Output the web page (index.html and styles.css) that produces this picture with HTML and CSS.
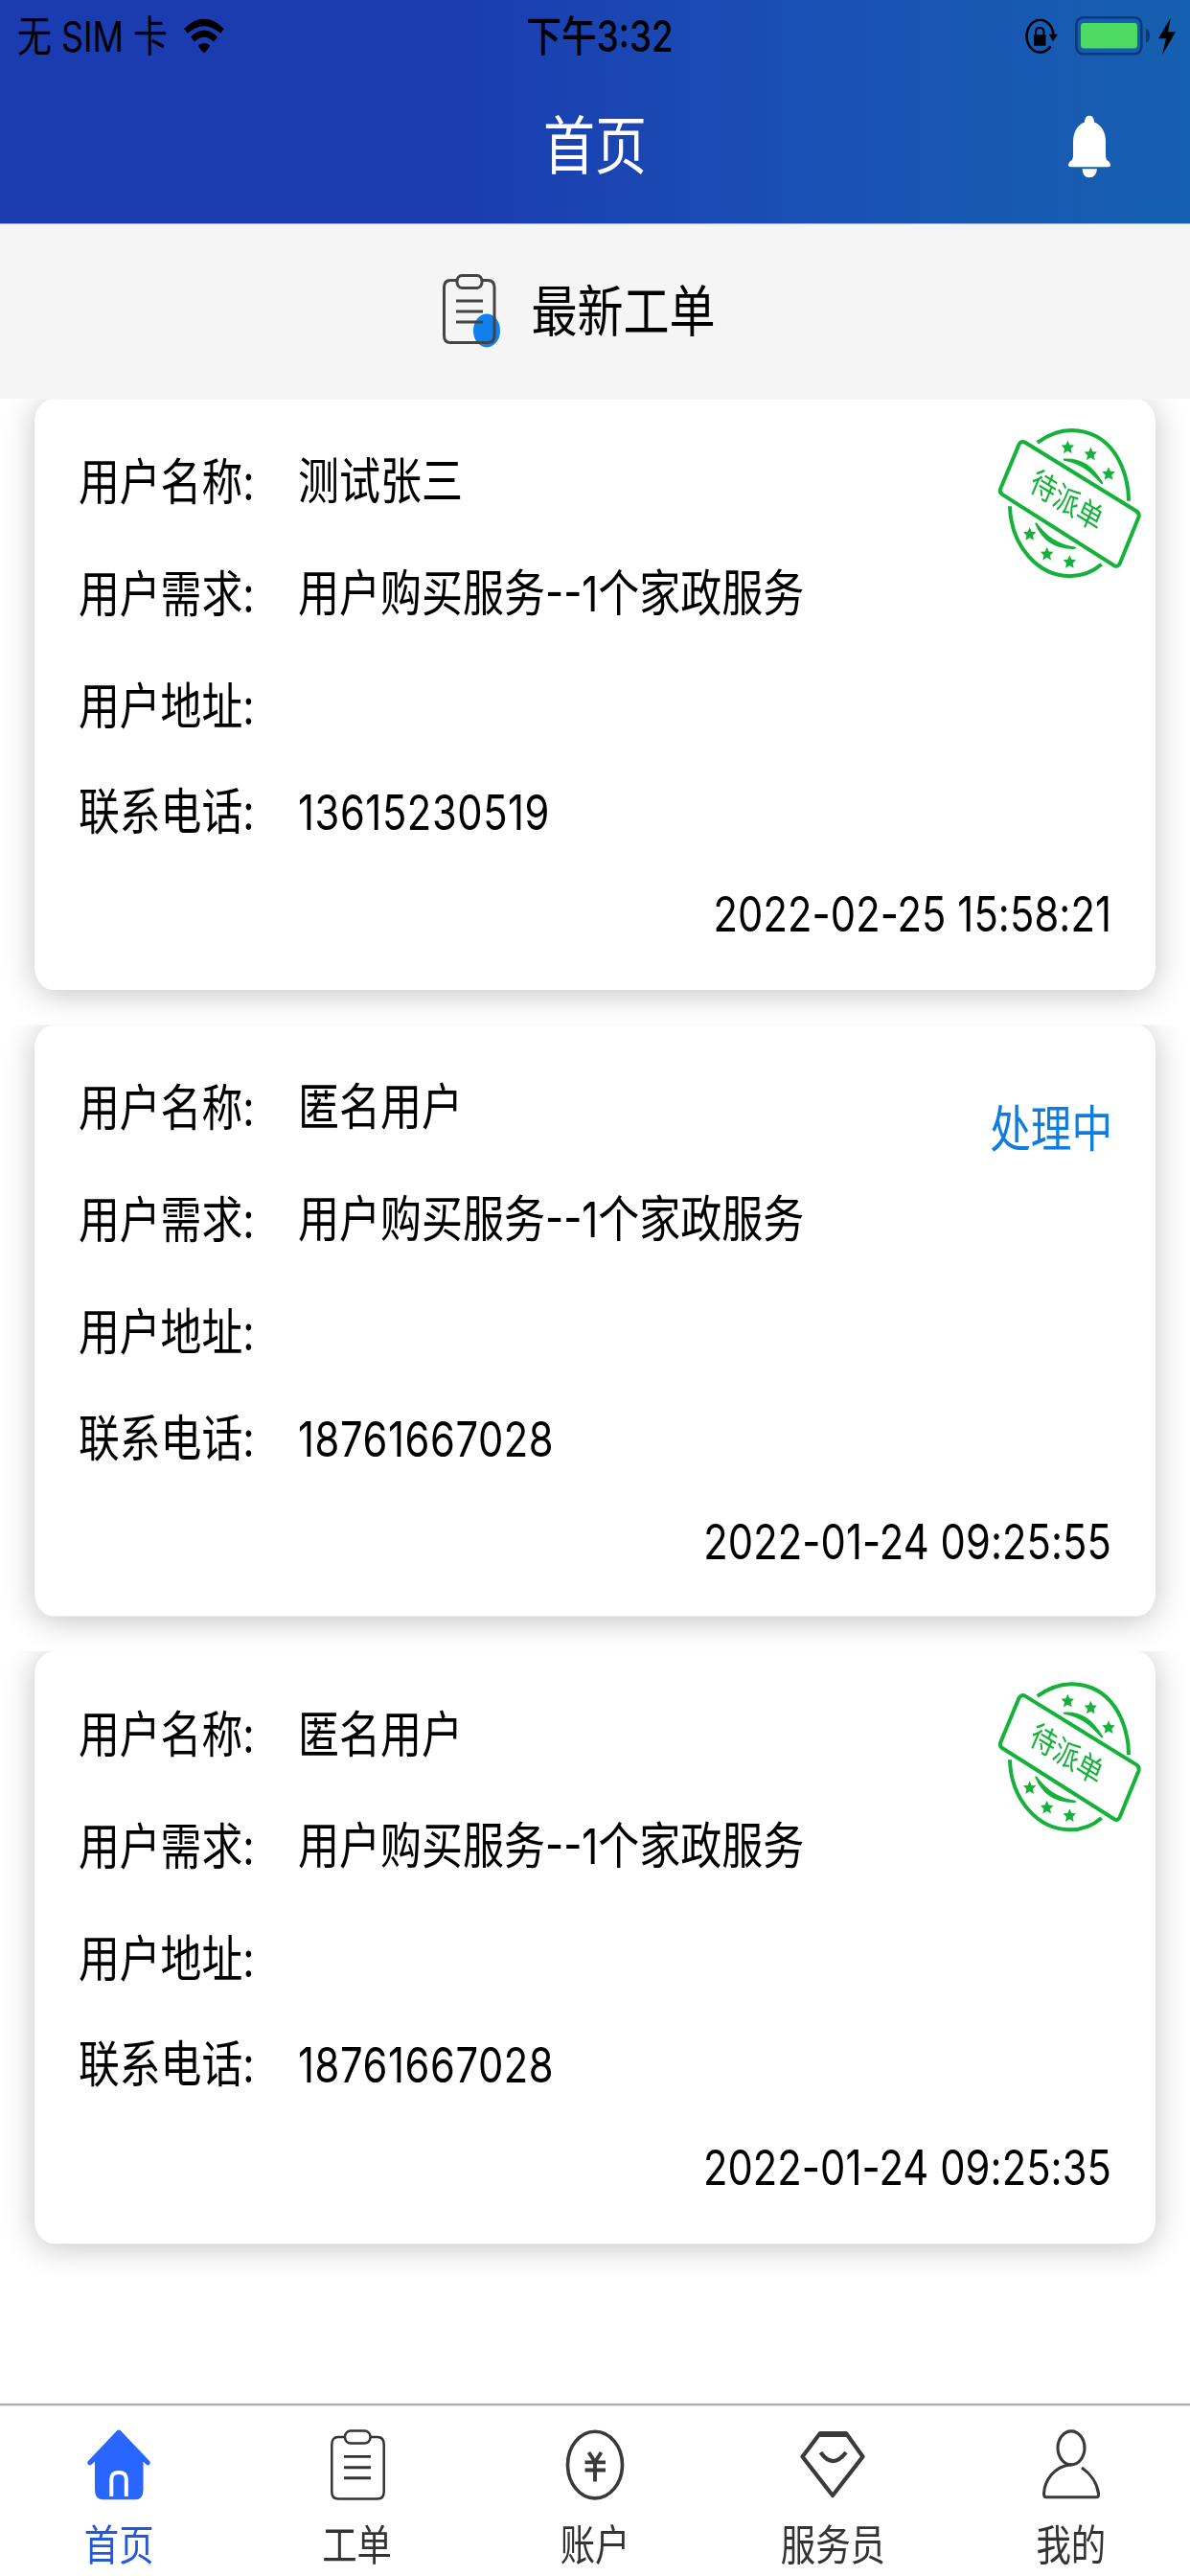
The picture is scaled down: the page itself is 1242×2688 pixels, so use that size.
FILE: index.html
```html
<!DOCTYPE html>
<html lang="zh-CN">
<head>
<meta charset="utf-8">
<title>首页</title>
<link rel="stylesheet" href="styles.css">
</head>
<body>
<svg width="0" height="0" class="defs" aria-hidden="true">
  <defs>
    <path id="star" d="M0-21 6-7 20-6 10 5 13 20 0 12-13 20-10 5-20-6-6-7Z"/>
    <g id="stamp">
      <g fill="none" stroke="#14b23a" stroke-width="12">
        <path d="M188 97C280 30 400 50 452 170C468 208 474 240 474 280"/>
        <path d="M102 296C105 420 190 515 290 515C325 515 362 502 389 478"/>
        <path d="M270 150C325 146 360 172 392 226C352 184 330 162 270 150Z" fill="#14b23a" stroke-width="6"/>
        <path d="M183 349C208 408 250 430 308 427C250 418 214 392 183 349Z" fill="#14b23a" stroke-width="6"/>
        <path d="M149 96 499 312Q509 319 505 331L446 476Q440 488 429 482L79 260Q68 253 73 241L130 104Q137 90 149 96Z"/>
      </g>
      <g fill="#14b23a">
        <use href="#star" x="283" y="111"/><use href="#star" x="355" y="132"/><use href="#star" x="411" y="194"/>
        <use href="#star" x="164" y="383"/><use href="#star" x="218" y="445"/><use href="#star" x="289" y="470"/>
        <text class="stamp-text" transform="translate(280 280) scale(1 1.2168) rotate(27)" text-anchor="middle" y="28">待派单</text>
      </g>
    </g>
  </defs>
</svg>
<div class="screen">
  <header class="header">
    <div class="status">
      <div class="status-left">
        <span class="carrier">无 SIM 卡</span>
        <svg class="wifi" viewBox="0 0 42 38" preserveAspectRatio="none"><path d="M0 11Q21-11 42 11L38 16Q21 0 4 16ZM7 20Q21 5 35 20L31 25Q21 15 11 25ZM15 29Q21 24 27 29Q26 33 21 37.500Q16 33 15 29Z"/></svg>
      </div>
      <div class="time">下午3:32</div>
      <div class="status-right">
        <svg class="lock" viewBox="0 0 34 38" preserveAspectRatio="none"><path d="M26.500 29A14 17 0 1 1 29.500 17" fill="none" stroke="#000" stroke-width="2.600"/><path d="M24.500 16.500H34L29 24ZM9 17H21.500V28.500H9Z"/><path d="M11 18V14Q11 9.500 15.200 9.500T19.500 14V18" fill="none" stroke="#000" stroke-width="2"/></svg>
        <svg class="battery" viewBox="0 0 78 42" preserveAspectRatio="none"><rect x="1.300" y="1.300" width="68" height="38.500" rx="7" ry="7.500" fill="none" stroke="#0b3a78" stroke-width="2.600"/><path d="M74 13Q78 14 78 20.500T74 28Z" fill="#0b3a78"/><rect x="6" y="7" width="59" height="27" rx="3.500" fill="#4cd964"/></svg>
        <svg class="bolt" viewBox="0 0 18 39" preserveAspectRatio="none"><path d="M13 0 0 22H8L4 39 18 15H10Z"/></svg>
      </div>
    </div>
    <div class="navbar">
      <h1 class="title">首页</h1>
      <svg class="bell" viewBox="0 0 44 66" preserveAspectRatio="none" fill="#fff"><path d="M22 0C25 0 27 3 27 7C35 10 39 18 39 28V42Q39 47 42 48Q44 50 44 52Q44 54 41 54H3Q0 54 0 52Q0 50 2 48Q5 47 5 42V28C5 18 9 10 17 7C17 3 19 0 22 0Z"/><path d="M14.500 56H30Q29 65 22 65T14.500 56Z"/></svg>
    </div>
  </header>

  <div class="section">
    <svg class="section-icon" viewBox="0 0 80 90" preserveAspectRatio="none" fill="none" stroke="#444" stroke-width="3">
      <ellipse cx="54" cy="65" rx="14" ry="17.500" fill="#0f80ec" stroke="none"/>
      <path d="M23 12.500H16Q9.500 12.500 9.500 20V70Q9.500 77.500 16 77.500H55Q62 77.500 62 70V20Q62 12.500 55 12.500H49"/>
      <rect x="23" y="7.500" width="26" height="13" rx="5" ry="6"/>
      <path d="M22 34H50M22 45H50M22 56H50"/>
    </svg>
    <h2 class="section-title">最新工单</h2>
  </div>

  <main class="list">
    <div class="item"><article class="card">
      <div class="row"><span class="label">用户名称:</span><span class="value">测试张三</span></div>
      <div class="row"><span class="label">用户需求:</span><span class="value">用户购买服务<span class="num">--1</span>个家政服务</span></div>
      <div class="row"><span class="label">用户地址:</span></div>
      <div class="row row-phone"><span class="label">联系电话:</span><span class="phone num">13615230519</span></div>
      <div class="date num">2022-02-25 15:58:21</div>
      <svg class="stamp" viewBox="0 0 600 570" preserveAspectRatio="none"><use href="#stamp"/></svg>
    </article></div>
    <div class="item"><article class="card">
      <div class="row"><span class="label">用户名称:</span><span class="value">匿名用户</span></div>
      <div class="row"><span class="label">用户需求:</span><span class="value">用户购买服务<span class="num">--1</span>个家政服务</span></div>
      <div class="row"><span class="label">用户地址:</span></div>
      <div class="row row-phone"><span class="label">联系电话:</span><span class="phone num">18761667028</span></div>
      <div class="date num">2022-01-24 09:25:55</div>
      <span class="state">处理中</span>
    </article></div>
    <div class="item"><article class="card">
      <div class="row"><span class="label">用户名称:</span><span class="value">匿名用户</span></div>
      <div class="row"><span class="label">用户需求:</span><span class="value">用户购买服务<span class="num">--1</span>个家政服务</span></div>
      <div class="row"><span class="label">用户地址:</span></div>
      <div class="row row-phone"><span class="label">联系电话:</span><span class="phone num">18761667028</span></div>
      <div class="date num">2022-01-24 09:25:35</div>
      <svg class="stamp" viewBox="0 0 600 570" preserveAspectRatio="none"><use href="#stamp"/></svg>
    </article></div>
  </main>

  <nav class="tabs">
    <div class="tab active">
      <svg class="tab-icon" viewBox="0 0 80 80" preserveAspectRatio="none"><path d="M40 4.500Q41.500 4.500 43 6.500L72 37Q73.500 39 72 40.500T69 41L65.500 37.500V67Q65.500 77.300 57 77.300H24Q15 77.300 15 67V37.500L11 41Q9.500 42 8 40.500T8 37L37 6.500Q38.500 4.500 40 4.500Z" fill="#2966ff"/><path d="M32.300 74V56Q32.300 49 40 49T47.800 56V74" fill="none" stroke="#fff" stroke-width="4"/></svg>
      <span>首页</span>
    </div>
    <div class="tab">
      <svg class="tab-icon" viewBox="0 0 80 80" preserveAspectRatio="none" fill="none" stroke="#333" stroke-width="2.500"><path d="M27 12H20Q13.300 12 13.300 20V69Q13.300 76.500 20 76.500H61Q67.700 76.500 67.700 69V20Q67.700 12 61 12H54"/><rect x="27" y="5.500" width="26.500" height="13" rx="6"/><path d="M26 32.300H54M26 43.700H54M26 54.700H54" stroke-width="2.800"/></svg>
      <span>工单</span>
    </div>
    <div class="tab">
      <svg class="tab-icon" viewBox="0 0 80 80" preserveAspectRatio="none" fill="none" stroke="#3a3a3a" stroke-width="3.600"><ellipse cx="40" cy="41" rx="28.500" ry="34.800"/><path d="M33.500 28 40 38 46.500 28M29.500 38.300H51M29.500 46.500H51M40 38V58.500" stroke-width="3.900"/></svg>
      <span>账户</span>
    </div>
    <div class="tab">
      <svg class="tab-icon" viewBox="0 0 80 80" preserveAspectRatio="none" fill="none" stroke="#3a3a3a" stroke-width="4.200" stroke-linejoin="round"><path d="M27 8 8.500 32.500 40 73 71.500 32.500 54 8Z"/><path d="M27 9H54" stroke-width="6"/><path d="M27.500 28Q40 46 54 28"/></svg>
      <span>服务员</span>
    </div>
    <div class="tab">
      <svg class="tab-icon" viewBox="0 0 80 80" preserveAspectRatio="none" fill="none" stroke="#3a3a3a" stroke-width="3.100" stroke-linejoin="round"><ellipse cx="40" cy="23.300" rx="14" ry="17.500"/><path d="M40 41C22 42 12 58 11.500 71Q11.500 74.700 14 74.700H66Q69 74.700 68.500 71C67 60 60 50 51 44"/></svg>
      <span>我的</span>
    </div>
  </nav>
</div>
</body>
</html>
```
FILE: styles.css
```css
html {
  height: 2688px;
  overflow: hidden;
  background: #fff;
}

body {
  margin: 0;
  height: 2688px;
  overflow: hidden;
  font-family: Inter, "Noto Sans CJK SC", sans-serif;
  color: #000;
}

.defs {
  position: absolute;
}

/* The screen is laid out at phone proportions and stretched to the tall window. */
.screen {
  display: flex;
  flex-direction: column;
  width: 1242px;
  height: 2209px;
  transform: scaleY(1.21684);
  transform-origin: 0 0;
}

.header {
  flex: none;
  height: 192.3px;
  background: linear-gradient(90deg, #1b3cb0 0%, #1b3cb0 38%, #1a50b5 68%, #1660b0 100%);
}

.status {
  display: grid;
  grid-template-columns: 1fr auto 1fr;
  align-items: center;
  height: 61px;
  font-size: 36px;
  line-height: 62px;
}

.status-left {
  display: flex;
  align-items: center;
  padding-left: 18px;
}

.carrier {
  width: 174px;
  letter-spacing: -0.1px;
  white-space: nowrap;
}

.wifi {
  width: 42px;
  height: 30px;
}

.time {
  padding-left: 10px;
  font-size: 36.8px;
  font-weight: 500;
}

.status-right {
  display: flex;
  align-items: center;
  justify-content: flex-end;
  padding-right: 15px;
}

.lock {
  width: 34px;
  height: 31px;
  margin-right: 18px;
}

.battery {
  width: 78px;
  height: 34px;
  margin-right: 9px;
}

.bolt {
  width: 18px;
  height: 32px;
}

.navbar {
  display: grid;
  grid-template-columns: 1fr auto 1fr;
  align-items: center;
  height: 129px;
}

.title {
  grid-column: 2;
  margin: 0;
  font-size: 54px;
  line-height: 70px;
  font-weight: 400;
  color: #fff;
}

.bell {
  justify-self: end;
  width: 44px;
  height: 54px;
  margin-right: 83px;
}

.section {
  display: flex;
  flex: none;
  align-items: center;
  justify-content: center;
  height: 149.5px;
  background: #f5f5f5;
}

.section-icon {
  width: 80px;
  height: 74px;
  margin-right: 20px;
}

.section-title {
  margin: 0 41px 0 0;
  font-size: 48px;
  line-height: 60px;
  font-weight: 400;
}

.list {
  flex: 1;
}

.item {
  padding: 0 36px;
  height: 537.2px;
  overflow: hidden;
  background: #fff;
}

.card {
  position: relative;
  box-sizing: border-box;
  height: 507.5px;
  padding: 24px 46px 0;
  border-radius: 20px;
  background: #fff;
  box-shadow: 0 3px 30px rgba(0, 0, 0, 0.24);
}

.row {
  display: flex;
  align-items: center;
  height: 96px;
  font-size: 43px;
  line-height: 60px;
}

.row-phone {
  height: 85.6px;
}

.label {
  width: 229px;
  font-size: 42.8px;
}

.value {
  margin-top: -3px;
}

.num {
  font-size: 41.7px;
}

.phone {
  letter-spacing: 0.6px;
}

.date {
  height: 90.4px;
  line-height: 90.4px;
  letter-spacing: 0.1px;
  text-align: right;
}

.state {
  position: absolute;
  top: 60px;
  right: 45px;
  font-size: 42.6px;
  line-height: 60px;
  color: #0f7ce0;
}

.stamp {
  position: absolute;
  top: 11.5px;
  left: 984px;
  width: 200px;
  height: 156.1px;
}

.stamp-text {
  font-family: "Noto Sans CJK SC", sans-serif;
  font-size: 81px;
  font-weight: 400;
}

.tabs {
  display: flex;
  flex: none;
  box-sizing: border-box;
  height: 148.5px;
  border-top: 2px solid #b0b0b0;
  background: #fff;
}

.tab {
  display: flex;
  flex: 1;
  flex-direction: column;
  align-items: center;
  padding-top: 17px;
  font-size: 36.4px;
  line-height: 44px;
  color: #333;
}

.tab-icon {
  width: 80px;
  height: 65.75px;
  margin-bottom: 16px;
}

.active {
  color: #2458dc;
}
```
